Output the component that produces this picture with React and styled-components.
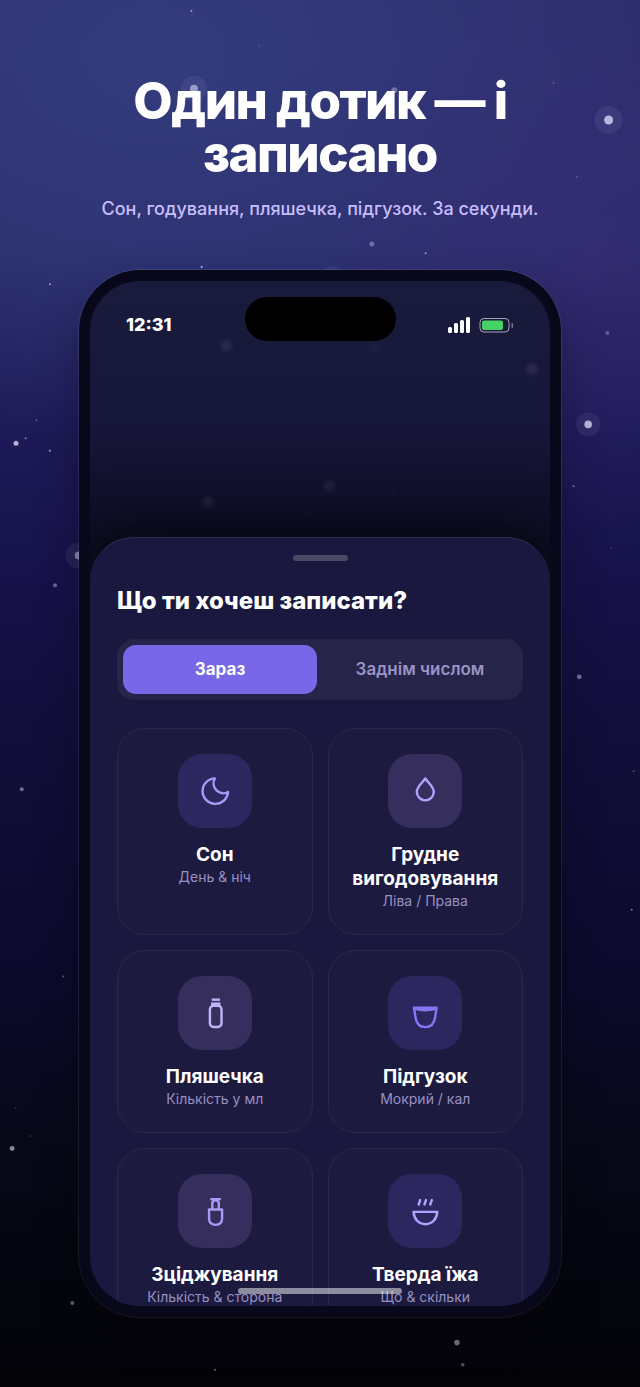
import styled, { createGlobalStyle } from "styled-components";

const GlobalStyle = createGlobalStyle`
  * {
    box-sizing: border-box;
  }
  body {
    margin: 0;
    background: #04040c;
    font-family: Inter, "Liberation Sans", sans-serif;
  }
  h1, h2, h3, p {
    margin: 0;
  }
`;

// x and y are percentages of the page, r is in px
const stars = [
  { x: 29.9, y: 0.8, r: 1, o: 0.6 },
  { x: 40.5, y: 3.3, r: 1, o: 0.15 },
  { x: 30.3, y: 6.4, r: 4, o: 0.55, halo: 13 },
  { x: 61.6, y: 6.5, r: 3, o: 0.35 },
  { x: 47.8, y: 6.8, r: 1, o: 0.5 },
  { x: 86.5, y: 6, r: 1, o: 0.25 },
  { x: 95.1, y: 8.65, r: 4.5, o: 0.75, halo: 14 },
  { x: 90.1, y: 12.75, r: 1, o: 0.25 },
  { x: 58.1, y: 17.6, r: 2.5, o: 0.35 },
  { x: 66.5, y: 18.25, r: 1, o: 0.6 },
  { x: 31.5, y: 19.25, r: 1, o: 0.8 },
  { x: 51.9, y: 19.9, r: 4, o: 0.15, halo: 10 },
  { x: 7.8, y: 20.5, r: 1, o: 0.6 },
  { x: 94.9, y: 24, r: 2, o: 0.3 },
  { x: 5.7, y: 30.3, r: 1, o: 0.35 },
  { x: 4, y: 31.6, r: 1, o: 0.5 },
  { x: 2.5, y: 31.95, r: 2.5, o: 0.75 },
  { x: 7.8, y: 32.5, r: 1.2, o: 0.5 },
  { x: 91.9, y: 30.6, r: 3.8, o: 0.75, halo: 12 },
  { x: 89.6, y: 35.05, r: 1, o: 0.5 },
  { x: 95.5, y: 39.5, r: 1, o: 0.15 },
  { x: 12.3, y: 40.05, r: 4, o: 0.5, halo: 13 },
  { x: 8.6, y: 42.2, r: 2, o: 0.4 },
  { x: 90.5, y: 48.8, r: 2.4, o: 0.45 },
  { x: 3.4, y: 56.9, r: 2, o: 0.45 },
  { x: 99, y: 55.6, r: 1, o: 0.3 },
  { x: 98.7, y: 65.6, r: 1, o: 0.5 },
  { x: 9.9, y: 70.4, r: 1, o: 0.4 },
  { x: 2.4, y: 79.9, r: 1, o: 0.15 },
  { x: 4.8, y: 81.9, r: 1, o: 0.15 },
  { x: 1.9, y: 82.8, r: 2.4, o: 0.6 },
  { x: 11.3, y: 93.95, r: 2, o: 0.4 },
  { x: 71.4, y: 96.8, r: 2.8, o: 0.5 },
  { x: 72.3, y: 98.4, r: 1.8, o: 0.35 },
  { x: 33.6, y: 98.75, r: 1, o: 0.45 },
];

const screenStars = [
  { x: 29.7, y: 6.3, r: 4, o: 0.18 },
  { x: 62, y: 6.5, r: 3, o: 0.1 },
  { x: 96.1, y: 8.6, r: 4, o: 0.2 },
  { x: 52, y: 20, r: 4, o: 0.14 },
  { x: 25.7, y: 21.5, r: 4, o: 0.17 },
  { x: 66, y: 20.6, r: 2, o: 0.1 },
  { x: 47.2, y: 22.7, r: 2, o: 0.1 },
];

const Sky = ({ items, blurred }) => (
  <SkySvg $blurred={blurred} aria-hidden="true">
    {items.map((s, i) => (
      <g key={i} fill="#e4e2ff">
        {s.halo && (
          <circle cx={`${s.x}%`} cy={`${s.y}%`} r={s.halo} opacity="0.07" />
        )}
        <circle cx={`${s.x}%`} cy={`${s.y}%`} r={s.r} opacity={s.o} />
      </g>
    ))}
  </SkySvg>
);

const icons = {
  moon: <path d="M21.200 12.800A9 9 0 1 1 11.900 3.100A7 7 0 0 0 21.200 12.800Z" />,
  drop: <path d="M12.200 3.200C10.200 6.200 6.200 8.900 6.200 12.600a6 6 0 0 0 12 0C18.200 8.900 14.200 6.200 12.200 3.200Z" />,
  bottle: (
    <>
      <path d="M9.700 2.600H15.500" strokeLinecap="butt" />
      <path d="M9.200 5.700H15.800" strokeLinecap="butt" strokeWidth="2.300" />
      <rect x="8.400" y="6.900" width="8.200" height="15" rx="2.600" />
    </>
  ),
  cup: (
    <>
      <path d="M4.200 8.300H20.200L19.100 15.200C18.400 19.700 15.900 22 12.200 22S6 19.700 5.300 15.200Z" />
      <path d="M4.800 9.100Q12.200 11 19.600 9.100" />
    </>
  ),
  pump: (
    <>
      <path d="M8.700 3.600H16.100" strokeLinecap="butt" />
      <path d="M10.100 10.500V6.800C10.100 5.200 11 4.400 12.400 4.400S14.700 5.200 14.700 6.800V10.500" />
      <path d="M7.800 10.900H17V17.200C17 20.200 15.300 21.800 12.400 21.800S7.800 20.200 7.800 17.200Z" />
    </>
  ),
  bowl: (
    <>
      <path d="M3.900 12.600H20.700C20.400 17.800 16.900 21.300 12.300 21.300S4.200 17.800 3.900 12.600Z" />
      <path d="M8.600 4.300L7.500 7.400M12.700 4.300L11.600 7.400M16.800 4.300L15.700 7.400" />
    </>
  ),
};

const actions = [
  { icon: "moon", title: "Сон", note: "День & ніч", color: "#a89af8" },
  { icon: "drop", title: "Грудне вигодовування", note: "Ліва / Права", color: "#b3a3ff", warm: true },
  { icon: "bottle", title: "Пляшечка", note: "Кількість у мл", color: "#c0b4f5", warm: true },
  { icon: "cup", title: "Підгузок", note: "Мокрий / кал", color: "#8674f4" },
  { icon: "pump", title: "Зціджування", note: "Кількість & сторона", color: "#a99af6", warm: true },
  { icon: "bowl", title: "Тверда їжа", note: "Що & скільки", color: "#b3a3ff" },
];

const App = () => {
  return (
    <Page>
      <GlobalStyle />
      <Sky items={stars} />
      <Header>
        <Headline>Один дотик — і записано</Headline>
        <Tagline>Сон, годування, пляшечка, підгузок. За секунди.</Tagline>
      </Header>
      <Phone>
        <Screen>
          <Sky items={screenStars} blurred />
          <StatusBar>
            <Time>12:31</Time>
            <Island />
            <StatusIcons>
              <svg width="24" height="16" fill="#fff" aria-hidden="true">
                <rect x="1" y="10" width="4" height="6" rx="1.500" />
                <rect x="7" y="6" width="4" height="10" rx="1.500" />
                <rect x="13" y="3" width="4" height="13" rx="1.500" />
                <rect x="19" y="0" width="4" height="16" rx="1.500" />
              </svg>
              <svg width="35" height="16" fill="none" aria-hidden="true">
                <rect x="1" y="1.500" width="29" height="13.500" rx="4" stroke="#a5a3b5" />
                <rect x="3" y="3.500" width="21" height="9.500" rx="2" fill="#44d364" />
                <rect x="32.500" y="6" width="1.500" height="5" rx="0.700" fill="#77758c" />
              </svg>
            </StatusIcons>
          </StatusBar>
          <Sheet>
            <Grabber />
            <SheetTitle>Що ти хочеш записати?</SheetTitle>
            <Segmented>
              <Segment type="button" $active>
                Зараз
              </Segment>
              <Segment type="button">Заднім числом</Segment>
            </Segmented>
            <Grid>
              {actions.map((a) => (
                <Card key={a.icon} type="button">
                  <IconBox $color={a.color} $warm={a.warm}>
                    <svg viewBox="0 0 24 24" aria-hidden="true">
                      {icons[a.icon]}
                    </svg>
                  </IconBox>
                  <CardTitle>{a.title}</CardTitle>
                  <CardNote>{a.note}</CardNote>
                </Card>
              ))}
            </Grid>
          </Sheet>
          <HomeIndicator />
        </Screen>
      </Phone>
    </Page>
  );
};

const Page = styled.main`
  position: relative;
  overflow: hidden;
  min-height: 100vh;
  padding: 74px 78px 69px;
  background:
    radial-gradient(ellipse 45% 20% at 94% 18%, rgba(62, 44, 122, 0.4), rgba(62, 44, 122, 0.2) 50%, rgba(62, 44, 122, 0)),
    radial-gradient(ellipse 90% 28% at 24% 4%, rgba(58, 74, 140, 0.55), rgba(58, 74, 140, 0.28) 50%, rgba(58, 74, 140, 0)),
    linear-gradient(#2c2c6c 0%, #2a2b6a 18%, #1c1956 32%, #161249 42%, #110e3a 54%, #0c0a2c 70%, #080819 82%, #030308 100%);
`;

const SkySvg = styled.svg`
  position: absolute;
  inset: 0;
  width: 100%;
  height: 100%;
  filter: ${(p) => (p.$blurred ? "blur(3px)" : "none")};
`;

const Header = styled.header`
  position: relative;
  display: flex;
  flex-direction: column;
  align-items: center;
  gap: 15px;
  margin-bottom: 46px;
  text-align: center;
`;

const Headline = styled.h1`
  max-width: 440px;
  font-size: 51px;
  line-height: 53px;
  font-weight: 800;
  letter-spacing: -0.03em;
  color: #fff;
`;

const Tagline = styled.p`
  font-size: 18px;
  line-height: 28px;
  font-weight: 500;
  color: #c8bdfb;
`;

const Phone = styled.section`
  position: relative;
  display: flex;
  aspect-ratio: 484 / 1049;
  padding: 11px;
  border: 1px solid rgba(255, 255, 255, 0.08);
  border-radius: 62px;
  background: #08081a;
  background-clip: padding-box;
  box-shadow: 0 20px 40px rgba(0, 0, 0, 0.25);
`;

const Screen = styled.div`
  position: relative;
  flex: 1;
  display: flex;
  flex-direction: column;
  min-width: 0;
  overflow: hidden;
  border-radius: 50px;
  background: linear-gradient(#191b3c 0%, #16163a 14%, #0e0d24 25%);
`;

const StatusBar = styled.div`
  position: relative;
  flex: 0 0 256px;
  display: grid;
  grid-template-columns: 1fr auto 1fr;
  align-items: start;
  padding: 16px 36px 0;
`;

const Time = styled.span`
  font-size: 18px;
  line-height: 56px;
  font-weight: 800;
  color: #fff;
`;

const Island = styled.div`
  width: 151px;
  height: 44px;
  border-radius: 22px;
  background: #000;
`;

const StatusIcons = styled.div`
  display: flex;
  justify-content: flex-end;
  align-items: center;
  gap: 8px;
  height: 56px;
`;

const Sheet = styled.div`
  position: relative;
  flex: 1;
  min-height: 0;
  overflow: hidden;
  padding: 17px 27px 0;
  border-top: 1px solid #312e52;
  border-radius: 44px 44px 0 0;
  background: #1b183f;
  box-shadow: 0 -12px 50px rgba(0, 0, 0, 0.5);
`;

const Grabber = styled.div`
  width: 55px;
  height: 6px;
  margin: 0 auto 23px;
  border-radius: 3px;
  background: #4c4967;
`;

const SheetTitle = styled.h2`
  margin-bottom: 21px;
  font-size: 24px;
  line-height: 34px;
  font-weight: 800;
  color: #fff;
`;

const Segmented = styled.div`
  display: flex;
  gap: 6px;
  padding: 6px;
  margin-bottom: 28px;
  border-radius: 18px;
  background: #272449;
`;

const Segment = styled.button`
  flex: 1;
  padding: 0;
  border: 0;
  border-radius: 13px;
  font-family: inherit;
  font-size: 17px;
  line-height: 49px;
  font-weight: ${(p) => (p.$active ? 700 : 600)};
  color: ${(p) => (p.$active ? "#fff" : "#9a93c6")};
  background: ${(p) => (p.$active ? "#7867e6" : "transparent")};
`;

const Grid = styled.div`
  display: grid;
  grid-template-columns: 1fr 1fr;
  gap: 15px;
`;

const Card = styled.button`
  display: flex;
  flex-direction: column;
  align-items: center;
  justify-content: flex-start;
  min-width: 0;
  padding: 25px 16px 23px;
  border: 1px solid #2b284e;
  border-radius: 28px;
  font-family: inherit;
  text-align: center;
  background: #1d1a40;
`;

const IconBox = styled.span`
  display: grid;
  place-items: center;
  width: 74px;
  height: 74px;
  margin-bottom: 15px;
  border-radius: 24px;
  background: ${(p) => (p.$warm ? "#362f5e" : "#2d275f")};

  svg {
    width: 34px;
    height: 34px;
    fill: none;
    stroke: ${(p) => p.$color};
    stroke-width: 1.7;
    stroke-linecap: round;
    stroke-linejoin: round;
  }
`;

const CardTitle = styled.span`
  font-size: 19px;
  line-height: 24px;
  font-weight: 700;
  color: #fff;
`;

const CardNote = styled.span`
  font-size: 14px;
  line-height: 20px;
  color: #9890c0;
`;

const HomeIndicator = styled.div`
  position: absolute;
  left: 50%;
  bottom: 12px;
  width: 164px;
  height: 6px;
  border-radius: 3px;
  background: rgba(255, 255, 255, 0.5);
  transform: translateX(-50%);
`;

export default App;
